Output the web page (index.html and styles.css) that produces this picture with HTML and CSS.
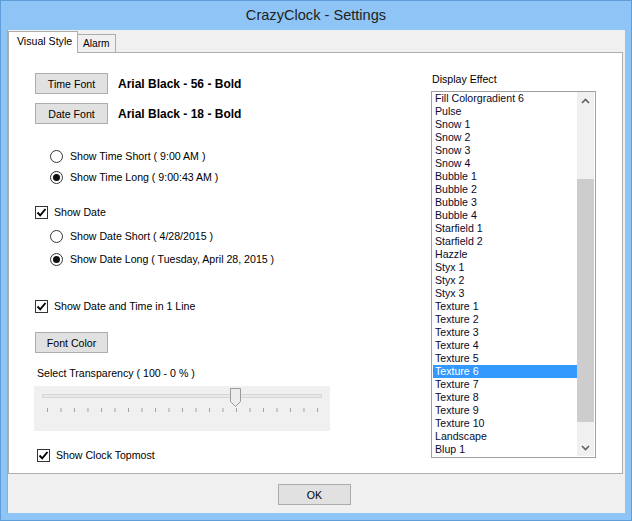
FILE: index.html
```html
<!DOCTYPE html>
<html>
<head>
<meta charset="utf-8">
<title>CrazyClock - Settings</title>
<link rel="stylesheet" href="styles.css">
</head>
<body>
<div class="window">
  <div class="titlebar">CrazyClock - Settings</div>
  <div class="client">
    <div class="tabs">
      <div class="tab active">Visual Style</div>
      <div class="tab">Alarm</div>
    </div>
    <div class="panel">
      <div class="left">
        <div class="row r1"><button class="btn">Time Font</button><span class="fontname">Arial Black - 56 - Bold</span></div>
        <div class="row r2"><button class="btn">Date Font</button><span class="fontname">Arial Black - 18 - Bold</span></div>
        <div class="row opt r3 indent"><span class="radio"></span><span>Show Time Short ( 9:00 AM )</span></div>
        <div class="row opt r4 indent"><span class="radio on"></span><span>Show Time Long ( 9:00:43 AM )</span></div>
        <div class="row opt r5"><span class="check"><svg width="11" height="11" viewBox="0 0 11 11"><path d="M1.5 5.5 L4.2 8.3 L9.5 2" fill="none" stroke="#000" stroke-width="1.9"/></svg></span><span>Show Date</span></div>
        <div class="row opt r6 indent"><span class="radio"></span><span>Show Date Short ( 4/28/2015 )</span></div>
        <div class="row opt r7 indent"><span class="radio on"></span><span>Show Date Long ( Tuesday, April 28, 2015 )</span></div>
        <div class="row opt r8"><span class="check"><svg width="11" height="11" viewBox="0 0 11 11"><path d="M1.5 5.5 L4.2 8.3 L9.5 2" fill="none" stroke="#000" stroke-width="1.9"/></svg></span><span>Show Date and Time in 1 Line</span></div>
        <div class="row r9"><button class="btn">Font Color</button></div>
        <div class="row r10 label">Select Transparency ( 100 - 0 % )</div>
        <div class="slider r11">
          <svg width="296" height="45" viewBox="0 0 296 45">
            <rect x="8.5" y="8.5" width="279" height="3" fill="#e7eaea" stroke="#d6d6d6"/>
            <g stroke="#a3a3a3" stroke-width="1">
              <line x1="13.5" y1="22" x2="13.5" y2="26"/>
              <line x1="27" y1="22" x2="27" y2="26"/>
              <line x1="40.5" y1="22" x2="40.5" y2="26"/>
              <line x1="54" y1="22" x2="54" y2="26"/>
              <line x1="67.5" y1="22" x2="67.5" y2="26"/>
              <line x1="81" y1="22" x2="81" y2="26"/>
              <line x1="94.5" y1="22" x2="94.5" y2="26"/>
              <line x1="108" y1="22" x2="108" y2="26"/>
              <line x1="121.5" y1="22" x2="121.5" y2="26"/>
              <line x1="135" y1="22" x2="135" y2="26"/>
              <line x1="148.5" y1="22" x2="148.5" y2="26"/>
              <line x1="162" y1="22" x2="162" y2="26"/>
              <line x1="175.5" y1="22" x2="175.5" y2="26"/>
              <line x1="189" y1="22" x2="189" y2="26"/>
              <line x1="202.5" y1="22" x2="202.5" y2="26"/>
              <line x1="216" y1="22" x2="216" y2="26"/>
              <line x1="229.5" y1="22" x2="229.5" y2="26"/>
              <line x1="243" y1="22" x2="243" y2="26"/>
              <line x1="256.5" y1="22" x2="256.5" y2="26"/>
              <line x1="270" y1="22" x2="270" y2="26"/>
              <line x1="283.5" y1="22" x2="283.5" y2="26"/>
            </g>
            <path d="M196.5 2.5 H206.5 V15.5 L201.5 20.5 L196.5 15.5 Z" fill="#ececec" stroke="#9a9a9a"/>
          </svg>
        </div>
        <div class="row opt r12 topmost"><span class="check"><svg width="11" height="11" viewBox="0 0 11 11"><path d="M1.5 5.5 L4.2 8.3 L9.5 2" fill="none" stroke="#000" stroke-width="1.9"/></svg></span><span>Show Clock Topmost</span></div>
      </div>
      <div class="right">
        <div class="label effect">Display Effect</div>
        <div class="listbox">
          <ul class="items">
            <li>Fill Colorgradient 6</li>
            <li>Pulse</li>
            <li>Snow 1</li>
            <li>Snow 2</li>
            <li>Snow 3</li>
            <li>Snow 4</li>
            <li>Bubble 1</li>
            <li>Bubble 2</li>
            <li>Bubble 3</li>
            <li>Bubble 4</li>
            <li>Starfield 1</li>
            <li>Starfield 2</li>
            <li>Hazzle</li>
            <li>Styx 1</li>
            <li>Styx 2</li>
            <li>Styx 3</li>
            <li>Texture 1</li>
            <li>Texture 2</li>
            <li>Texture 3</li>
            <li>Texture 4</li>
            <li>Texture 5</li>
            <li class="sel">Texture 6</li>
            <li>Texture 7</li>
            <li>Texture 8</li>
            <li>Texture 9</li>
            <li>Texture 10</li>
            <li>Landscape</li>
            <li>Blup 1</li>
          </ul>
          <div class="scrollbar">
            <div class="arrow"><svg width="9" height="6" viewBox="0 0 9 6"><path d="M1 5 L4.5 1.5 L8 5" fill="none" stroke="#606060" stroke-width="1.6"/></svg></div>
            <div class="track"><div class="thumb"></div></div>
            <div class="arrow"><svg width="9" height="6" viewBox="0 0 9 6"><path d="M1 1 L4.5 4.5 L8 1" fill="none" stroke="#606060" stroke-width="1.6"/></svg></div>
          </div>
        </div>
      </div>
    </div>
    <div class="footer"><button class="btn ok">OK</button></div>
  </div>
</div>
</body>
</html>
```
FILE: styles.css
```css
* { box-sizing: border-box; }
html, body { margin: 0; padding: 0; }
body {
  width: 632px;
  height: 521px;
  overflow: hidden;
  font-family: "Liberation Sans", Arial, sans-serif;
  font-size: 10.6px;
  color: #000;
}
.window {
  width: 632px;
  height: 521px;
  background: #8ec5f6;
  border: 1px solid #5f9ed8;
  display: flex;
  flex-direction: column;
}
.titlebar {
  height: 29px;
  line-height: 29px;
  text-align: center;
  font-size: 14.6px;
  color: #222;
}
.client {
  flex: 1;
  margin: 0 6px 7px 6px;
  background: #f0f0f0;
  display: flex;
  flex-direction: column;
  border-left: 1px solid #7fb2e3;
}
.tabs {
  height: 22px;
  display: flex;
  align-items: flex-end;
  padding-left: 0;
}
.tab {
  height: 18px;
  border: 1px solid #adadad;
  border-bottom: none;
  background: #f0f0f0;
  padding: 0 8px 0 5px;
  line-height: 17px;
  font-size: 10.2px;
}
.tab.active {
  height: 22px;
  margin-bottom: -1px;
  background: #fff;
  position: relative;
  z-index: 1;
  width: 70px;
  padding: 0 0 0 8px;
  line-height: 19px;
  font-size: 10.6px;
}
.tab + .tab {
  margin-left: -1px;
  width: 39px;
}
.panel {
  height: 422px;
  margin: 0 2px 0 0;
  background: #fff;
  border: 1px solid #adadad;
  display: flex;
}
.left {
  flex: 1;
  display: flex;
  flex-direction: column;
  padding-left: 26px;
}
.row {
  display: flex;
  align-items: center;
}
.opt { height: 16px; gap: 6px; }
.indent { padding-left: 15px; gap: 7px; }
.topmost { padding-left: 2px; }
.r1 { margin-top: 20px; }
.r2 { margin-top: 9px; }
.r3 { margin-top: 24px; }
.r4 { margin-top: 5px; }
.r5 { margin-top: 19px; }
.r6 { margin-top: 8px; }
.r7 { margin-top: 7px; }
.r8 { margin-top: 31px; }
.r9 { margin-top: 18px; }
.r10 { margin-top: 13px; height: 14px; padding-left: 2px; }
.r11 { margin-top: 6px; margin-left: -1px; }
.r12 { margin-top: 16px; }
.btn {
  width: 73px;
  height: 21px;
  background: #e1e1e1;
  border: 1px solid #adadad;
  font-family: "Liberation Sans", Arial, sans-serif;
  font-size: 10.6px;
  color: #000;
  padding: 0;
  margin: 0;
  flex: none;
}
.fontname {
  margin-left: 10px;
  font-weight: bold;
  font-size: 12px;
}
.radio {
  width: 13px;
  height: 13px;
  border: 1px solid #333;
  border-radius: 50%;
  background: #fff;
  flex: none;
  display: flex;
  align-items: center;
  justify-content: center;
}
.radio.on::after {
  content: "";
  width: 7px;
  height: 7px;
  border-radius: 50%;
  background: #111;
}
.check {
  width: 13px;
  height: 13px;
  border: 1px solid #333;
  background: #fff;
  flex: none;
  display: flex;
  align-items: center;
  justify-content: center;
}
.check svg { display: block; }
.label { line-height: 14px; }
.slider {
  width: 296px;
  height: 45px;
  background: #f0f0f0;
}
.slider svg { display: block; }
.right {
  width: 165px;
  margin-right: 26px;
  margin-left: 0;
  padding-top: 19px;
  display: flex;
  flex-direction: column;
}
.effect { height: 14px; padding-left: 1px; }
.listbox {
  margin-top: 5px;
  height: 367px;
  border: 1px solid #a0a0a0;
  display: flex;
  padding-left: 1px;
}
.items {
  list-style: none;
  margin: 0;
  padding: 0;
  width: 144px;
  font-size: 10.6px;
}
.items li {
  height: 13px;
  line-height: 13px;
  padding-left: 2px;
  color: #0a0a2a;
  white-space: nowrap;
}
.items li.sel {
  background: #3399ff;
  color: #fff;
}
.scrollbar {
  width: 17px;
  height: 364px;
  background: #f0f0f0;
  display: flex;
  flex-direction: column;
}
.arrow {
  height: 17px;
  display: flex;
  align-items: center;
  justify-content: center;
}
.arrow svg { display: block; }
.track {
  flex: 1;
  padding-top: 70px;
}
.thumb {
  height: 243px;
  background: #cdcdcd;
}
.footer {
  flex: 1;
  display: flex;
  justify-content: center;
  padding-top: 10px;
  padding-right: 4px;
}
.btn.ok { height: 21px; }
```
